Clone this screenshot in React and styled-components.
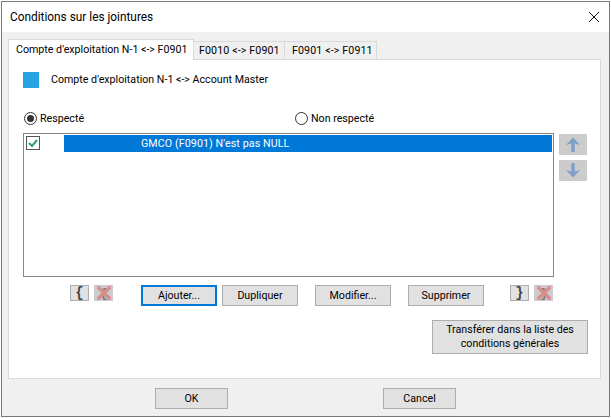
import React from 'react';
import styled, { createGlobalStyle } from 'styled-components';

const GlobalStyle = createGlobalStyle`
  html, body {
    margin: 0;
    padding: 0;
    background: #ffffff;
  }
  body {
    font-family: Roboto, "Noto Sans", sans-serif;
    font-size: 10.67px;
    color: #000000;
  }
`;

const Page = styled.div`
  width: 611px;
  height: 418px;
  box-sizing: border-box;
  padding: 1px;
`;

const Window = styled.div`
  width: 609px;
  height: 416px;
  box-sizing: border-box;
  border: 1px solid #7a7a7a;
  display: flex;
  flex-direction: column;
  background: #f0f0f0;
`;

const TitleBar = styled.div`
  height: 30px;
  flex: none;
  background: #ffffff;
  display: flex;
  align-items: center;
  justify-content: space-between;
  padding: 0 10px 0 8px;
`;

const Title = styled.div`
  font-size: 11.85px;
`;

const Body = styled.div`
  flex: 1;
  display: flex;
  flex-direction: column;
  padding: 7px 8px 0 6px;
`;

const TabStrip = styled.div`
  height: 21px;
  display: flex;
  align-items: flex-end;
  position: relative;
  z-index: 1;
  margin-bottom: -1px;
`;

const Tab = styled.div`
  box-sizing: border-box;
  height: ${(p) => (p.$active ? '21px' : '19px')};
  width: ${(p) => p.$width}px;
  padding-left: ${(p) => p.$inset}px;
  padding-bottom: ${(p) => (p.$active ? '1px' : '0')};
  background: ${(p) => (p.$active ? '#ffffff' : '#f0f0f0')};
  border: 1px solid #d9d9d9;
  border-left-width: ${(p) => (p.$active ? '1px' : '0')};
  border-bottom: ${(p) => (p.$active ? 'none' : '1px solid #d9d9d9')};
  display: flex;
  align-items: center;
  white-space: nowrap;
  letter-spacing: ${(p) => (p.$active ? '0' : '0.12px')};
`;

const Pane = styled.div`
  box-sizing: border-box;
  width: 593px;
  height: 320px;
  background: #ffffff;
  border: 1px solid #d9d9d9;
  padding: 12px 0 0 14px;
  display: flex;
  flex-direction: column;
`;

const HeaderRow = styled.div`
  height: 16px;
  display: flex;
  align-items: center;
  gap: 12px;
`;

const HeaderText = styled.span`
  margin-top: -2px;
`;

const Swatch = styled.div`
  width: 16px;
  height: 16px;
  background: #29a3df;
`;

const RadioRow = styled.div`
  margin-top: 23px;
  height: 14px;
  display: flex;
  align-items: center;
`;

const RadioLabel = styled.div`
  width: ${(p) => p.$width}px;
  padding-left: 1px;
  display: flex;
  align-items: center;
  gap: 3px;
`;

const RadioText = styled.span`
  margin-top: 1px;
`;

const RadioDot = styled.span`
  box-sizing: border-box;
  width: 13px;
  height: 13px;
  border: 1px solid #333333;
  border-radius: 50%;
  display: flex;
  align-items: center;
  justify-content: center;

  &::after {
    content: '';
    display: ${(p) => (p.$checked ? 'block' : 'none')};
    width: 7px;
    height: 7px;
    border-radius: 50%;
    background: #333333;
  }
`;

const ListRow = styled.div`
  margin-top: 8px;
  display: flex;
  gap: 5px;
`;

const List = styled.div`
  box-sizing: border-box;
  width: 531px;
  height: 144px;
  border: 1px solid #828790;
  padding: 1px 1px 0 2px;
`;

const ListItem = styled.div`
  display: flex;
  height: 17px;
`;

const Check = styled.div`
  box-sizing: border-box;
  width: 14px;
  height: 14px;
  margin-top: 1px;
  border: 1px solid #555555;
  flex: none;
  display: flex;
  align-items: center;
  justify-content: center;
`;

const Selection = styled.div`
  margin-left: 24px;
  flex: 1;
  background: #0078d7;
  color: #ffffff;
  padding-left: 77px;
  display: flex;
  align-items: center;
  letter-spacing: 0.1px;
`;

const ArrowColumn = styled.div`
  padding-top: 1px;
  display: flex;
  flex-direction: column;
  gap: 5px;
`;

const ArrowButton = styled.div`
  width: 28px;
  height: 21px;
  background: #cccccc;
  display: flex;
  align-items: center;
  justify-content: center;
`;

const ActionRow = styled.div`
  margin-top: 8px;
  padding-left: ${(p) => p.$indent}px;
  display: flex;
  align-items: flex-start;
`;

const Button = styled.div`
  box-sizing: border-box;
  width: ${(p) => p.$width || 76}px;
  height: ${(p) => p.$height || 21}px;
  margin-left: ${(p) => p.$gap || 0}px;
  background: #e1e1e1;
  border: ${(p) => (p.$focused ? '2px solid #0078d7' : '1px solid #adadad')};
  display: flex;
  align-items: center;
  justify-content: center;
  text-align: center;
  line-height: 14px;
  flex: none;
`;

const BraceButton = styled.div`
  box-sizing: border-box;
  width: 19px;
  height: 16px;
  margin-left: ${(p) => p.$gap || 0}px;
  background: #e1e1e1;
  border: 1px solid #adadad;
  display: flex;
  align-items: center;
  justify-content: center;
  font-family: "Liberation Mono", monospace;
  font-weight: 700;
  font-size: 14px;
  line-height: 14px;
  color: #444444;
  flex: none;
`;

const DeleteButton = styled.div`
  width: 19px;
  height: 16px;
  margin-left: 5px;
  background: #cccccc;
  flex: none;
  display: flex;
  align-items: center;
  justify-content: center;
`;

const TransferRow = styled.div`
  margin-top: 14px;
  padding-left: 409px;
`;

const Footer = styled.div`
  padding-top: 9px;
  padding-left: 147px;
  display: flex;
`;

const CloseIcon = () => (
  <svg width="10" height="10" viewBox="0 0 10 10">
    <path d="M0 0 L10 10 M10 0 L0 10" stroke="#111111" strokeWidth="1" fill="none" />
  </svg>
);

const CheckMark = () => (
  <svg width="12" height="12" viewBox="0 0 12 12">
    <path d="M2 6 L5 9 L10 3" stroke="#2fa36b" strokeWidth="2" fill="none" />
  </svg>
);

const UpArrow = () => (
  <svg width="14" height="15" viewBox="0 0 14 15">
    <path d="M7 0.5 L14 8 L8.7 6.5 L8.7 15 L5.3 15 L5.3 6.5 L0 8 Z" fill="#7d9fc8" />
  </svg>
);

const DownArrow = () => (
  <svg width="14" height="15" viewBox="0 0 14 15">
    <path d="M5.3 0 L8.7 0 L8.7 8.5 L14 7 L7 14.5 L0 7 L5.3 8.5 Z" fill="#7d9fc8" />
  </svg>
);

const DeleteIcon = ({ glyph }) => (
  <svg width="16" height="16" viewBox="0 0 16 16">
    <text x="8" y="12" textAnchor="middle" fontFamily="Liberation Mono" fontWeight="700" fontSize="13" fill="#777777">
      {glyph}
    </text>
    <path d="M2 2 L14 14 M14 2 L2 14" stroke="#d88e88" strokeWidth="3.4" fill="none" />
    <path d="M1 1 h2 v2 h-2 Z M13 1 h2 v2 h-2 Z M1 13 h2 v2 h-2 Z M13 13 h2 v2 h-2 Z" fill="#e58ac8" />
  </svg>
);

export default function App() {
  return (
    <Page>
      <GlobalStyle />
      <Window>
        <TitleBar>
          <Title>Conditions sur les jointures</Title>
          <CloseIcon />
        </TitleBar>
        <Body>
          <TabStrip>
            <Tab $active $width={186} $inset={7}>Compte d'exploitation N-1 &lt;-&gt; F0901</Tab>
            <Tab $width={91} $inset={5}>F0010 &lt;-&gt; F0901</Tab>
            <Tab $width={92} $inset={7}>F0901 &lt;-&gt; F0911</Tab>
          </TabStrip>
          <Pane>
            <HeaderRow>
              <Swatch />
              <HeaderText>Compte d'exploitation N-1 &lt;-&gt; Account Master</HeaderText>
            </HeaderRow>
            <RadioRow>
              <RadioLabel $width={270}>
                <RadioDot $checked />
                <RadioText>Respecté</RadioText>
              </RadioLabel>
              <RadioLabel $width={150}>
                <RadioDot />
                <RadioText>Non respecté</RadioText>
              </RadioLabel>
            </RadioRow>
            <ListRow>
              <List>
                <ListItem>
                  <Check><CheckMark /></Check>
                  <Selection>GMCO (F0901) N'est pas NULL</Selection>
                </ListItem>
              </List>
              <ArrowColumn>
                <ArrowButton><UpArrow /></ArrowButton>
                <ArrowButton><DownArrow /></ArrowButton>
              </ArrowColumn>
            </ListRow>
            <ActionRow $indent={47}>
              <BraceButton>{'{'}</BraceButton>
              <DeleteButton><DeleteIcon glyph="{" /></DeleteButton>
              <Button $focused $gap={28}>Ajouter...</Button>
              <Button $gap={5}>Dupliquer</Button>
              <Button $gap={17}>Modifier...</Button>
              <Button $gap={17}>Supprimer</Button>
              <BraceButton $gap={26}>{'}'}</BraceButton>
              <DeleteButton><DeleteIcon glyph="}" /></DeleteButton>
            </ActionRow>
            <TransferRow>
              <Button $width={156} $height={34}>
                Transférer dans la liste des
                <br />
                conditions générales
              </Button>
            </TransferRow>
          </Pane>
          <Footer>
            <Button $width={73}>OK</Button>
            <Button $width={73} $gap={155}>Cancel</Button>
          </Footer>
        </Body>
      </Window>
    </Page>
  );
}
